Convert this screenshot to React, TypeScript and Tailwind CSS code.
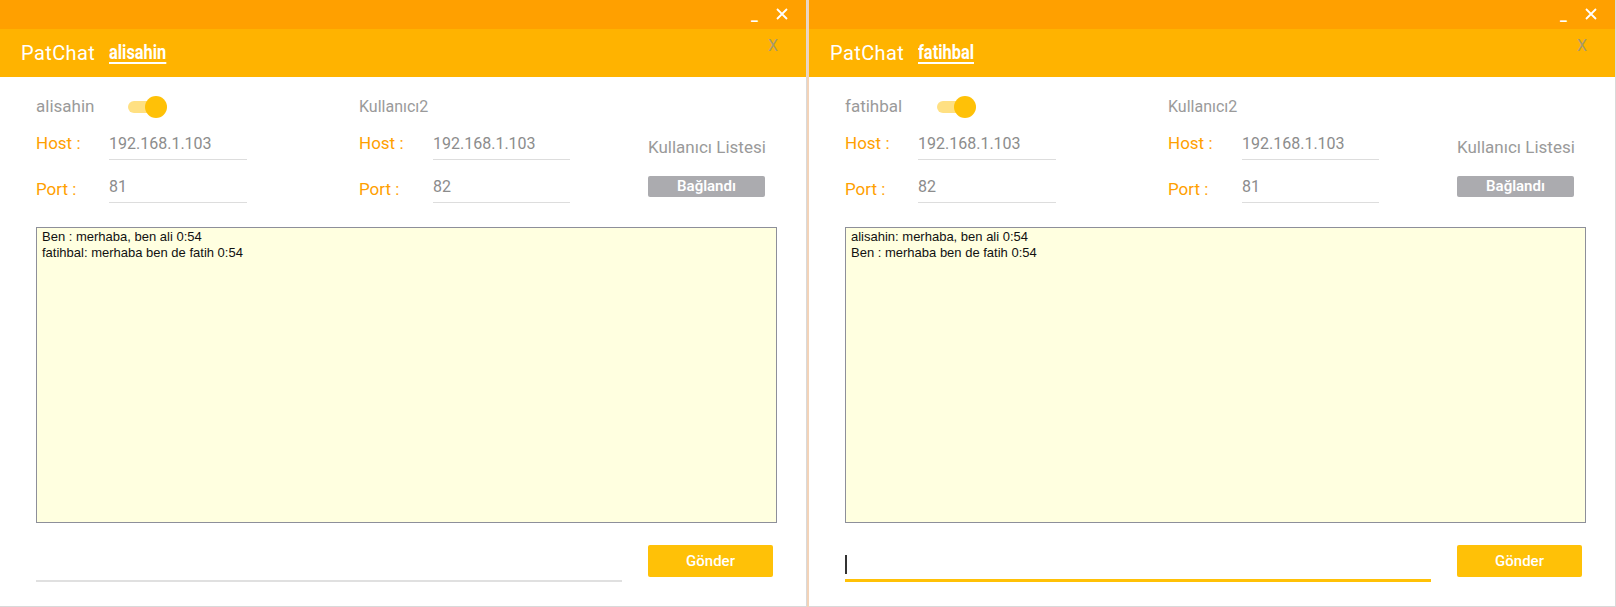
import React from 'react';

type Props = {
  user: string;
  hostA: string;
  portA: string;
  hostB: string;
  portB: string;
  lines: string[];
  focused?: boolean;
};

function Field({ label, value, labelW, fieldW, labelOff }: { label: string; value: string; labelW: string; fieldW: string; labelOff?: string }) {
  return (
    <div className="flex items-center h-[32px]">
      <span className={`${labelW} ${labelOff ?? ''} text-[17px] text-[#FFA000]`}>{label}</span>
      <div className={`${fieldW} h-[32px] flex items-center border-b border-[#dddddd] text-[16px] text-[#8c8c8c]`}>
        {value}
      </div>
    </div>
  );
}

function ChatWindow({ user, hostA, portA, hostB, portB, lines, focused }: Props) {
  return (
    <div className="w-[807px] h-[607px] flex flex-col bg-white border-r border-b border-[#d9d9d9]">
      <div className="h-[29px] bg-[#FFA000] flex items-center justify-end pr-[18px] gap-[18px] text-white">
        <span className="text-[15px] leading-none font-bold mt-[2px]">_</span>
        <svg width="12" height="12" viewBox="0 0 12 12" className="mb-[2px]">
          <path d="M1 1L11 11M11 1L1 11" stroke="white" strokeWidth="1.8" />
        </svg>
      </div>
      <div className="h-[48px] bg-[#FFB300] flex items-start pl-[21px] pr-[28px]">
        <span className="text-[20px] text-white mt-[9px] tracking-[0.4px]">PatChat</span>
        <span className="ml-[14px] mt-[8px] inline-block w-[58px] overflow-visible">
          <span className="inline-block origin-left scale-x-[0.78] text-[21px] font-bold text-white underline underline-offset-[3px] whitespace-nowrap">
            {user}
          </span>
        </span>
        <span className="ml-auto mt-[5px] text-[16px] text-[#a89a6a]">X</span>
      </div>

      <div className="flex-1 flex flex-col pl-[36px] pr-[28px]">
        <div className="flex">
          <div className="w-[323px] flex flex-col">
            <div className="mt-[19px] h-[22px] flex items-center">
              <span className="w-[91px] text-[17px] text-[#9a9a9a]">{user}</span>
              <div className="relative w-[40px] h-[22px]">
                <div className="absolute left-[1px] top-[5px] w-[30px] h-[12px] rounded-full bg-[#FFE082]" />
                <div className="absolute right-0 top-0 w-[22px] h-[22px] rounded-full bg-[#FFC107]" />
              </div>
            </div>
            <div className="mt-[10px]">
              <Field label="Host :" value={hostA} labelW="w-[73px]" fieldW="w-[138px]" />
            </div>
            <div className="mt-[11px]">
              <Field label="Port :" value={portA} labelW="w-[73px]" fieldW="w-[138px]" labelOff="mt-[6px]" />
            </div>
          </div>
          <div className="w-[289px] flex flex-col">
            <div className="mt-[19px] h-[22px] flex items-center text-[16px] text-[#9a9a9a]">Kullanıcı2</div>
            <div className="mt-[10px]">
              <Field label="Host :" value={hostB} labelW="w-[74px]" fieldW="w-[137px]" />
            </div>
            <div className="mt-[11px]">
              <Field label="Port :" value={portB} labelW="w-[74px]" fieldW="w-[137px]" labelOff="mt-[6px]" />
            </div>
          </div>
          <div className="flex flex-col">
            <div className="mt-[60px] text-[17px] text-[#9a9a9a] leading-[20px]">Kullanıcı Listesi</div>
            <button className="mt-[19px] w-[117px] h-[21px] rounded-[2px] bg-[#ababaf] text-white text-[15px] font-semibold leading-none">
              Bağlandı
            </button>
          </div>
        </div>

        <div
          className="mt-[24px] w-[741px] h-[296px] bg-[#FFFFE0] border border-[#8d8f9a] px-[5px] pt-[1px] text-[13px] leading-[16px] text-[#111]"
          style={{ fontFamily: "'Liberation Sans', Arial, sans-serif" }}
        >
          {lines.map((l, i) => (
            <div key={i}>{l}</div>
          ))}
        </div>

        <div className="mt-[22px] flex items-start">
          <div
            className={`w-[586px] h-[37px] flex items-center ${
              focused ? 'border-b-[3px] border-[#FFC107]' : 'border-b-2 border-[#e0e0e0]'
            }`}
          >
            {focused && <div className="w-[2px] h-[19px] bg-[#333] mt-[4px]" />}
          </div>
          <button className="ml-[26px] w-[125px] h-[32px] rounded-[2px] bg-[#FFC107] text-white text-[15px] font-medium">
            Gönder
          </button>
        </div>
      </div>
    </div>
  );
}

export default function App() {
  return (
    <div className="w-[1616px] h-[607px] flex overflow-hidden bg-white" style={{ fontFamily: 'Roboto, sans-serif' }}>
      <ChatWindow
        user="alisahin"
        hostA="192.168.1.103"
        portA="81"
        hostB="192.168.1.103"
        portB="82"
        lines={['Ben : merhaba, ben ali 0:54', 'fatihbal: merhaba ben de fatih 0:54']}
      />
      <div className="w-[2px] h-[607px] bg-[#f3d3b8]" />
      <ChatWindow
        user="fatihbal"
        hostA="192.168.1.103"
        portA="82"
        hostB="192.168.1.103"
        portB="81"
        lines={['alisahin: merhaba, ben ali 0:54', 'Ben : merhaba ben de fatih 0:54']}
        focused
      />
    </div>
  );
}
